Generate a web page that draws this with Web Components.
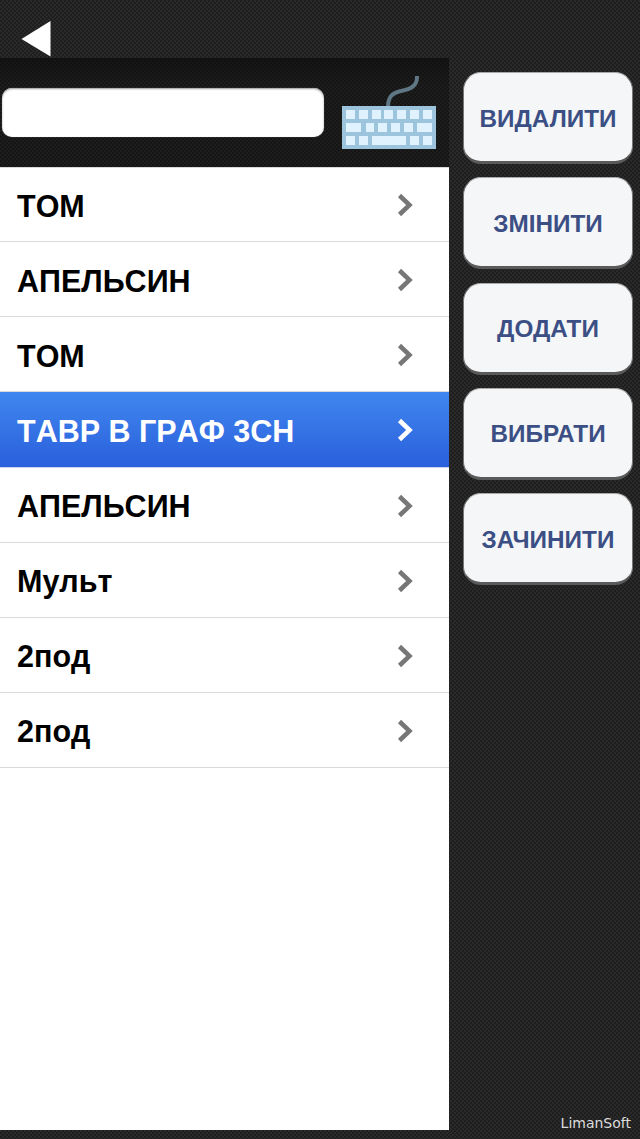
<!DOCTYPE html>
<html>
<head>
<meta charset="utf-8">
<title>LimanSoft</title>
<style>
	html, body {
		margin: 0;
		padding: 0;
		height: 100%;
	}

	body {
		width: 640px;
		height: 1139px;
		overflow: hidden;
		font-family: "Liberation Sans", Arial, sans-serif;
		background-color: #2a2a2a;
		background-image:
			radial-gradient(circle at 1px 1px, #1e1e1e 1px, transparent 1.4px),
			radial-gradient(circle at 3px 3px, #1e1e1e 1px, transparent 1.4px);
		background-size: 4px 4px;
	}
</style>
</head>
<body>
<app-screen>
	<top-bar slot="top"></top-bar>
	<list-panel slot="panel">
		<list-row label="ТОМ"></list-row>
		<list-row label="АПЕЛЬСИН"></list-row>
		<list-row label="ТОМ"></list-row>
		<list-row label="ТАВР В ГРАФ 3СН" selected></list-row>
		<list-row label="АПЕЛЬСИН"></list-row>
		<list-row label="Мульт"></list-row>
		<list-row label="2под"></list-row>
		<list-row label="2под"></list-row>
	</list-panel>
	<action-button slot="actions" label="ВИДАЛИТИ"></action-button>
	<action-button slot="actions" label="ЗМІНИТИ"></action-button>
	<action-button slot="actions" label="ДОДАТИ"></action-button>
	<action-button slot="actions" label="ВИБРАТИ"></action-button>
	<action-button slot="actions" label="ЗАЧИНИТИ"></action-button>
	<span slot="credit">LimanSoft</span>
</app-screen>

<script>
customElements.define('app-screen', class extends HTMLElement
{
	connectedCallback()
	{
		const shadow = this.attachShadow({ mode: 'open' });

		shadow.innerHTML = `
			<style>
				:host {
					display: grid;
					grid-template-columns: 449px 191px;
					grid-template-rows: 58px 1072px 9px;
					width: 640px;
					height: 1139px;
					position: relative;
				}

				.top {
					grid-column: 1 / 3;
				}

				.actions {
					display: flex;
					flex-direction: column;
					gap: 13.25px;
					padding: 14px 7px 0 14px;
				}

				.credit {
					position: absolute;
					right: 9px;
					bottom: 8px;
					color: #dcdcdc;
					font: 14px "DejaVu Sans", sans-serif;
				}
			</style>
			<div class="top"><slot name="top"></slot></div>
			<slot name="panel"></slot>
			<div class="actions"><slot name="actions"></slot></div>
			<div class="credit"><slot name="credit"></slot></div>
		`;
	}
});

customElements.define('top-bar', class extends HTMLElement
{
	connectedCallback()
	{
		const shadow = this.attachShadow({ mode: 'open' });

		shadow.innerHTML = `
			<style>
				:host {
					display: block;
					height: 58px;
					box-sizing: border-box;
					padding: 20px 0 0 21px;
				}

				svg {
					display: block;
				}
			</style>
			<svg width="31" height="38" viewBox="0 0 31 38">
				<path d="M29.500 1 L0.500 19 L29.500 36.500 Z" fill="#fff"/>
			</svg>
		`;
	}
});

customElements.define('list-panel', class extends HTMLElement
{
	connectedCallback()
	{
		const shadow = this.attachShadow({ mode: 'open' });

		shadow.innerHTML = `
			<style>
				:host {
					display: flex;
					flex-direction: column;
					width: 449px;
					height: 1072px;
				}

				.search {
					display: flex;
					align-items: flex-start;
					height: 109px;
					box-sizing: border-box;
					padding: 30px 0 0 2px;
					background: linear-gradient(rgba(0, 0, 0, 0.5), rgba(0, 0, 0, 0.3) 25%, rgba(0, 0, 0, 0.3));
				}

				.field {
					width: 322px;
					height: 49px;
					box-sizing: border-box;
					background: #fff;
					border-radius: 10px;
					box-shadow: inset 0 1px 2px #999, 0 0 1px #888;
				}

				svg {
					display: block;
					margin: -12px 0 0 17px;
					filter: blur(0.6px);
				}

				.list {
					flex: 1;
					background: #fff;
					box-shadow: inset 0 1px #d9d9d9;
				}
			</style>
			<div class="search">
				<div class="field"></div>
				<svg width="98" height="76" viewBox="0 0 98 76">
					<path d="M47 31 C47 21 51 17 60 15 C70 13 76 10 76 1" fill="none" stroke="#5f7785" stroke-width="4" stroke-linecap="round"/>
					<rect x="1" y="30" width="94" height="43" fill="#9cc4dc"/>
					<g fill="#e0f2fe">
						<rect x="5" y="34" width="9" height="9"/>
						<rect x="18" y="34" width="9" height="9"/>
						<rect x="31" y="34" width="9" height="9"/>
						<rect x="43" y="34" width="9" height="9"/>
						<rect x="56" y="34" width="9" height="9"/>
						<rect x="69" y="34" width="9" height="9"/>
						<rect x="82" y="34" width="9" height="9"/>
						<rect x="5" y="47" width="15" height="9"/>
						<rect x="25" y="47" width="8" height="9"/>
						<rect x="37" y="47" width="9" height="9"/>
						<rect x="50" y="47" width="9" height="9"/>
						<rect x="63" y="47" width="9" height="9"/>
						<rect x="76" y="47" width="15" height="9"/>
						<rect x="5" y="60" width="9" height="9"/>
						<rect x="18" y="60" width="9" height="9"/>
						<rect x="31" y="60" width="34" height="9"/>
						<rect x="69" y="60" width="9" height="9"/>
						<rect x="82" y="60" width="9" height="9"/>
					</g>
				</svg>
			</div>
			<div class="list"><slot></slot></div>
		`;
	}
});

customElements.define('list-row', class extends HTMLElement
{
	connectedCallback()
	{
		const shadow = this.attachShadow({ mode: 'open' });

		shadow.innerHTML = `
			<style>
				:host {
					display: flex;
					align-items: center;
					justify-content: space-between;
					height: 75.125px;
					box-sizing: border-box;
					padding: 0 36px 0 17px;
					border-bottom: 1px solid #d9d9d9;
					color: #000;
					font: bold 30.5px "Liberation Sans", Arial, sans-serif;
					font-kerning: none;
				}

				:host([selected]) {
					color: #fff;
					background: linear-gradient(#4087ef, #2a5fdc);
					border-bottom-color: #c8d4ee;
				}

				span {
					padding-top: 4px;
				}

				svg {
					display: block;
					margin-top: 2px;
					stroke: #777;
				}

				:host([selected]) svg {
					stroke: #fff;
				}
			</style>
			<span></span>
			<svg width="16" height="24" viewBox="0 0 16 24">
				<path d="M2.500 2.500 L12.500 12 L2.500 21.500" fill="none" stroke-width="4.500"/>
			</svg>
		`;

		shadow.querySelector('span').textContent = this.getAttribute('label');
	}
});

customElements.define('action-button', class extends HTMLElement
{
	connectedCallback()
	{
		const shadow = this.attachShadow({ mode: 'open' });

		shadow.innerHTML = `
			<style>
				:host {
					display: flex;
					align-items: center;
					justify-content: center;
					height: 92px;
					box-sizing: border-box;
					padding-top: 3px;
					background: #f5f6f8;
					border: 1px solid #777;
					border-top-color: #a8a8a8;
					border-bottom: 3px solid #5a5a5a;
					border-radius: 18px;
					color: #3b4f85;
					font: bold 24.3px "Liberation Sans", Arial, sans-serif;
				}
			</style>
			<span></span>
		`;

		shadow.querySelector('span').textContent = this.getAttribute('label');
	}
});
</script>
</body>
</html>
